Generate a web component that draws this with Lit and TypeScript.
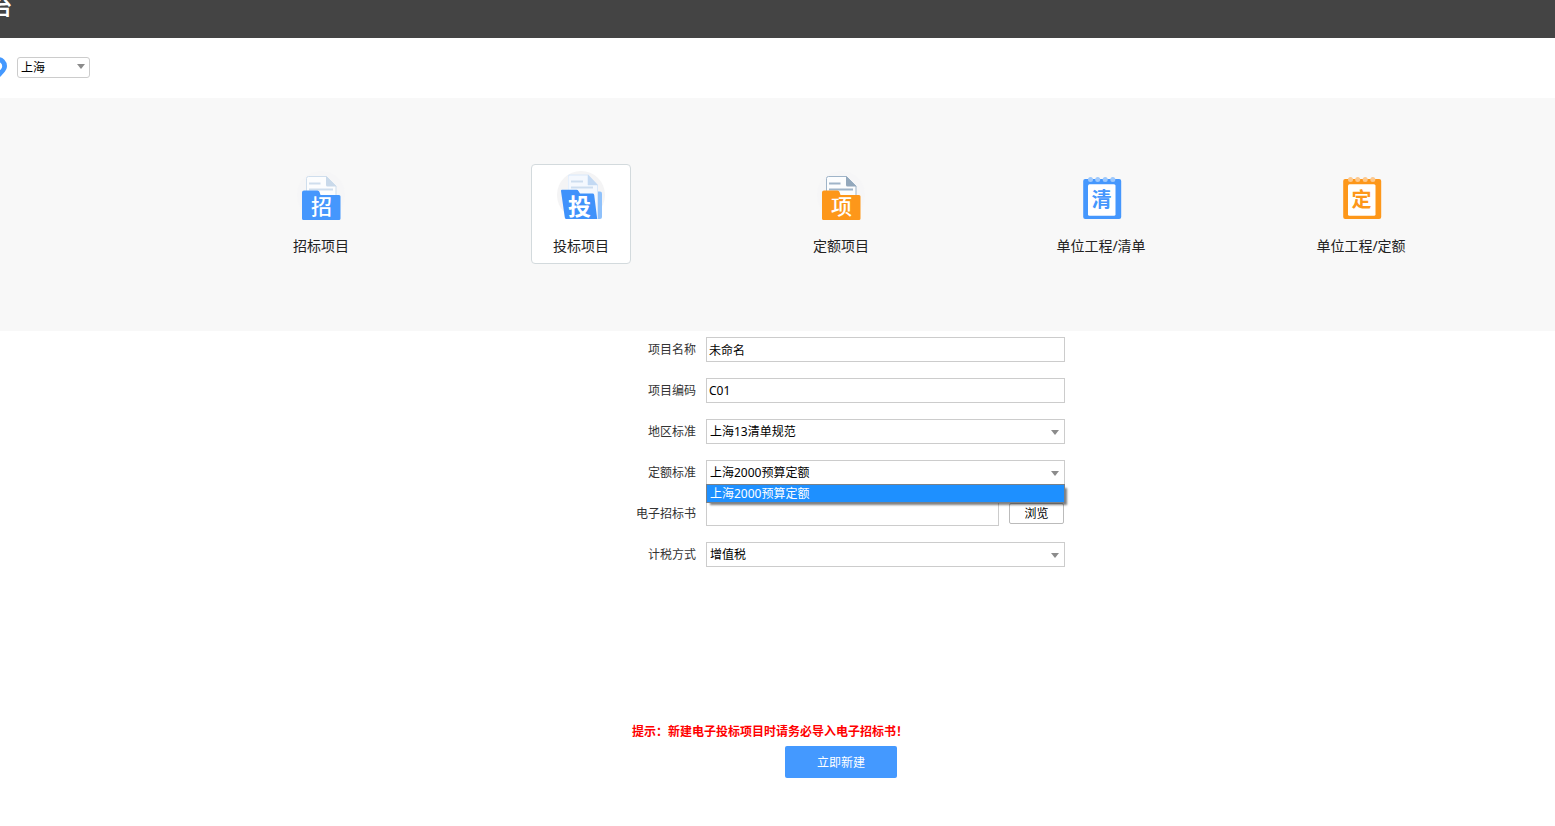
import { LitElement, html, svg, css } from "lit";
import { customElement, property, state } from "lit/decorators.js";
import { classMap } from "lit/directives/class-map.js";

type Kind = "folder" | "open-folder" | "notepad";
interface Entry {
  label: string;
  glyph: string;
  kind: Kind;
  tone: "blue" | "orange";
}

const ENTRIES: Entry[] = [
  { label: "招标项目", glyph: "招", kind: "folder", tone: "blue" },
  { label: "投标项目", glyph: "投", kind: "open-folder", tone: "blue" },
  { label: "定额项目", glyph: "项", kind: "folder", tone: "orange" },
  { label: "单位工程/清单", glyph: "清", kind: "notepad", tone: "blue" },
  { label: "单位工程/定额", glyph: "定", kind: "notepad", tone: "orange" },
];

@customElement("entry-icon")
class EntryIcon extends LitElement {
  @property() glyph = "";
  @property() kind: Kind = "folder";
  @property() tone = "blue";

  static styles = css`
    :host { display: block; width: 48px; height: 50px; }
    svg { display: block; }
    text { font-family: "Noto Sans CJK SC", sans-serif; text-anchor: middle; }
  `;

  render() {
    const main = this.tone === "blue" ? "#4597fd" : "#fd971a";
    const line = this.tone === "blue" ? "#cfdeed" : "#9fb4c8";
    const fold = this.tone === "blue" ? "#c9d9ea" : "#93a8bc";
    const pale = this.tone === "blue" ? "#9cc8fd" : "#fdc88c";
    const folder = svg`
      <circle cx="24" cy="24" r="24" fill="#f6f6f7"/>
      <path d="M11.500 5.500H29.500L39 15V30H9.500V7.500Q9.500 5.500 11.500 5.500Z" fill="#fcfdfe" stroke=${line}/>
      <path d="M29 5L39.500 15.500H30.500Q29 15.500 29 14Z" fill=${fold}/>
      <path d="M12 12.500H23.500M12 18.500H36" stroke=${line} stroke-width="2"/>
      <path d="M7 19.500H20.500Q22 19.500 22.500 21L23.500 24H42Q43.500 24 43.500 25.500V47.500Q43.500 49 42 49H6.500Q5 49 5 47.500V21.500Q5 19.500 7 19.500Z" fill=${main}/>
      <text x="24.500" y="43" font-size="21" font-weight="500" fill="#fff">${this.glyph}</text>`;
    const open = svg`
      <circle cx="24" cy="24" r="24" fill="#f4f4f5"/>
      <path d="M38 20.500H43Q45 20.500 45 22.500V46Q45 48 43 48H36Z" fill="#8fc1fb"/>
      <path d="M12 3.500H31L41 14V48H11V5Z" fill="#d9e8fa"/>
      <path d="M12.500 4.500H30.500V14H40V46H11.500V5.500Z" fill="#f4f8fe"/>
      <path d="M31 3.500L41 14.200H31Z" fill="#c3d9f3"/>
      <path d="M14 10.500H26M14 16.500H36" stroke="#cdddef" stroke-width="2"/>
      <path d="M5 18.800H19.500Q20.800 18.800 21.600 20.200L23 22.600H35.500Q37 22.600 37.200 24L40.200 48H9.500Q8 48 7.800 46.500L4 20Q3.900 18.800 5 18.800Z" fill="#3f92fb"/>
      <text x="22.500" y="44" font-size="23" font-weight="700" fill="#fff">${this.glyph}</text>`;
    const notepad = svg`
      <rect x="6.200" y="8" width="38" height="40" rx="2" fill=${main}/>
      <rect x="11" y="13.300" width="27.500" height="31.500" rx="1.500" fill="#fff"/>
      ${[13.5, 20.7, 28.2, 35.8].map(
        (x) => svg`<circle cx=${x} cy="8.600" r="2.500" fill=${pale}/>`
      )}
      <text x="24.500" y="36" font-size="20" font-weight="700" fill=${main}>${this.glyph}</text>`;
    return html`<svg width="48" height="50" viewBox="0 0 48 50" aria-hidden="true">
      ${this.kind === "folder" ? folder : this.kind === "open-folder" ? open : notepad}
    </svg>`;
  }
}

@customElement("app-root")
class AppRoot extends LitElement {
  @state() private selected = 1;
  @state() private quotaOpen = true;

  static styles = css`
    :host {
      display: block;
      min-height: 100vh;
      overflow: hidden;
      background: #fff;
      color: #333;
      font: 12px/18px "Noto Sans", "Noto Sans CJK SC", sans-serif;
    }
    * { box-sizing: border-box; }
    button, input, select { font: inherit; color: #000; margin: 0; }
    .header { height: 38px; background: #444; color: #fff; overflow: hidden; }
    .title { margin: -6px 0 0 -8px; font-size: 20px; line-height: 28px; font-weight: 700; }
    .region { display: flex; align-items: center; height: 60px; padding-bottom: 2px; }
    .pin { display: block; margin: 0 10px 0 -11px; }
    .select { position: relative; }
    .select select {
      display: block;
      appearance: none;
      width: 100%;
      height: 25px;
      padding: 0 20px 0 3px;
      border: 1px solid #ccc;
      border-radius: 0;
      background: #fff;
      outline: none;
    }
    .select::after {
      content: "";
      position: absolute;
      right: 6px;
      top: 11px;
      border: 4px solid transparent;
      border-top: 5px solid #8b8b8b;
      border-bottom: 0;
      pointer-events: none;
    }
    .city { width: 73px; }
    .city select { height: 21px; padding-top: 1px; border-radius: 3px; }
    .city.select::after { right: 5px; top: 7px; }
    .entries {
      display: grid;
      grid-template-columns: repeat(5, 1fr);
      justify-items: center;
      padding: 66px 64px 67px 191px;
      background: #f8f8f8;
    }
    .entry {
      display: flex;
      flex-direction: column;
      align-items: center;
      gap: 15px;
      width: 100px;
      height: 100px;
      padding: 6px 0 0;
      border: 1px solid transparent;
      border-radius: 4px;
      background: none;
      font-size: 14px;
      line-height: 20px;
      white-space: nowrap;
      color: #222;
    }
    .entry.active { background: #fff; border-color: #d3dadd; }
    .main { padding: 6px 0 48px 127px; }
    .form { width: 448px; margin: 0 auto; display: flex; flex-direction: column; gap: 16px; }
    .row { display: grid; grid-template-columns: 79px 1fr; column-gap: 10px; align-items: center; }
    .row label { text-align: right; }
    .text {
      display: block;
      width: 100%;
      min-width: 0;
      height: 25px;
      padding: 0 2px;
      border: 1px solid #ccc;
      background: #fff;
      outline: none;
    }
    .file { display: flex; align-items: center; gap: 10px; padding-right: 1px; }
    .browse {
      flex: none;
      width: 55px;
      height: 21px;
      padding: 0;
      border: 1px solid #bbb;
      border-radius: 2px;
      background: #fff;
    }
    .options {
      position: absolute;
      z-index: 1;
      top: 24px;
      left: 0;
      right: 0;
      margin: 0;
      padding: 0;
      list-style: none;
      border: 1px solid #7a8188;
      background: #fff;
      box-shadow: 3px 3px 2px -1px rgba(0, 0, 0, 0.5);
    }
    .option { padding: 0 3px; line-height: 17px; background: #1e90ff; color: #fff; }
    .foot { width: 448px; margin: 156px auto 0; }
    .tip { margin: 0 0 5px; padding-left: 15px; color: #f00; font-weight: 700; }
    .create {
      display: block;
      width: 112px;
      height: 32px;
      margin: 0 auto;
      padding: 2px 0 0;
      border: 0;
      border-radius: 2px;
      background: #4499ff;
      color: #fff;
    }
  `;

  render() {
    return html`
      <header class="header"><h1 class="title">台</h1></header>
      <div class="region">
        <svg class="pin" width="18" height="22" viewBox="0 0 18 22" aria-hidden="true">
          <path d="M9 1A9 9 0 0 1 18 10C18 14 14.500 17.500 11 21Q9 23 7 21C3.500 17.500 0 14 0 10A9 9 0 0 1 9 1ZM9 6A4.200 4.200 0 1 0 9 14.400A4.200 4.200 0 1 0 9 6Z" fill="#4499ff" fill-rule="evenodd"/>
        </svg>
        <div class="select city">
          <select aria-label="地区"><option>上海</option></select>
        </div>
      </div>
      <nav class="entries">
        ${ENTRIES.map(
          (e, i) => html`<button
            type="button"
            class=${classMap({ entry: true, active: i === this.selected })}
            @click=${() => (this.selected = i)}
          >
            <entry-icon .glyph=${e.glyph} .kind=${e.kind} .tone=${e.tone}></entry-icon>
            <span>${e.label}</span>
          </button>`
        )}
      </nav>
      <main class="main">
        <form class="form" @submit=${(ev: Event) => ev.preventDefault()}>
          <div class="row">
            <label for="name">项目名称</label>
            <input class="text" id="name" type="text" .value=${"未命名"} />
          </div>
          <div class="row">
            <label for="code">项目编码</label>
            <input class="text" id="code" type="text" .value=${"C01"} />
          </div>
          <div class="row">
            <label for="area">地区标准</label>
            <div class="select"><select id="area"><option>上海13清单规范</option></select></div>
          </div>
          <div class="row">
            <label for="quota">定额标准</label>
            <div class="select">
              <select id="quota"><option>上海2000预算定额</option></select>
              ${this.quotaOpen
                ? html`<ul class="options" role="listbox" aria-label="定额标准">
                    <li class="option" role="option" aria-selected="true" @click=${() => (this.quotaOpen = false)}>上海2000预算定额</li>
                  </ul>`
                : ""}
            </div>
          </div>
          <div class="row">
            <label for="file">电子招标书</label>
            <div class="file">
              <input class="text" id="file" type="text" />
              <button class="browse" type="button">浏览</button>
            </div>
          </div>
          <div class="row">
            <label for="tax">计税方式</label>
            <div class="select"><select id="tax"><option>增值税</option></select></div>
          </div>
        </form>
        <div class="foot">
          <p class="tip">提示：新建电子投标项目时请务必导入电子招标书！</p>
          <button class="create" type="button">立即新建</button>
        </div>
      </main>
    `;
  }
}
